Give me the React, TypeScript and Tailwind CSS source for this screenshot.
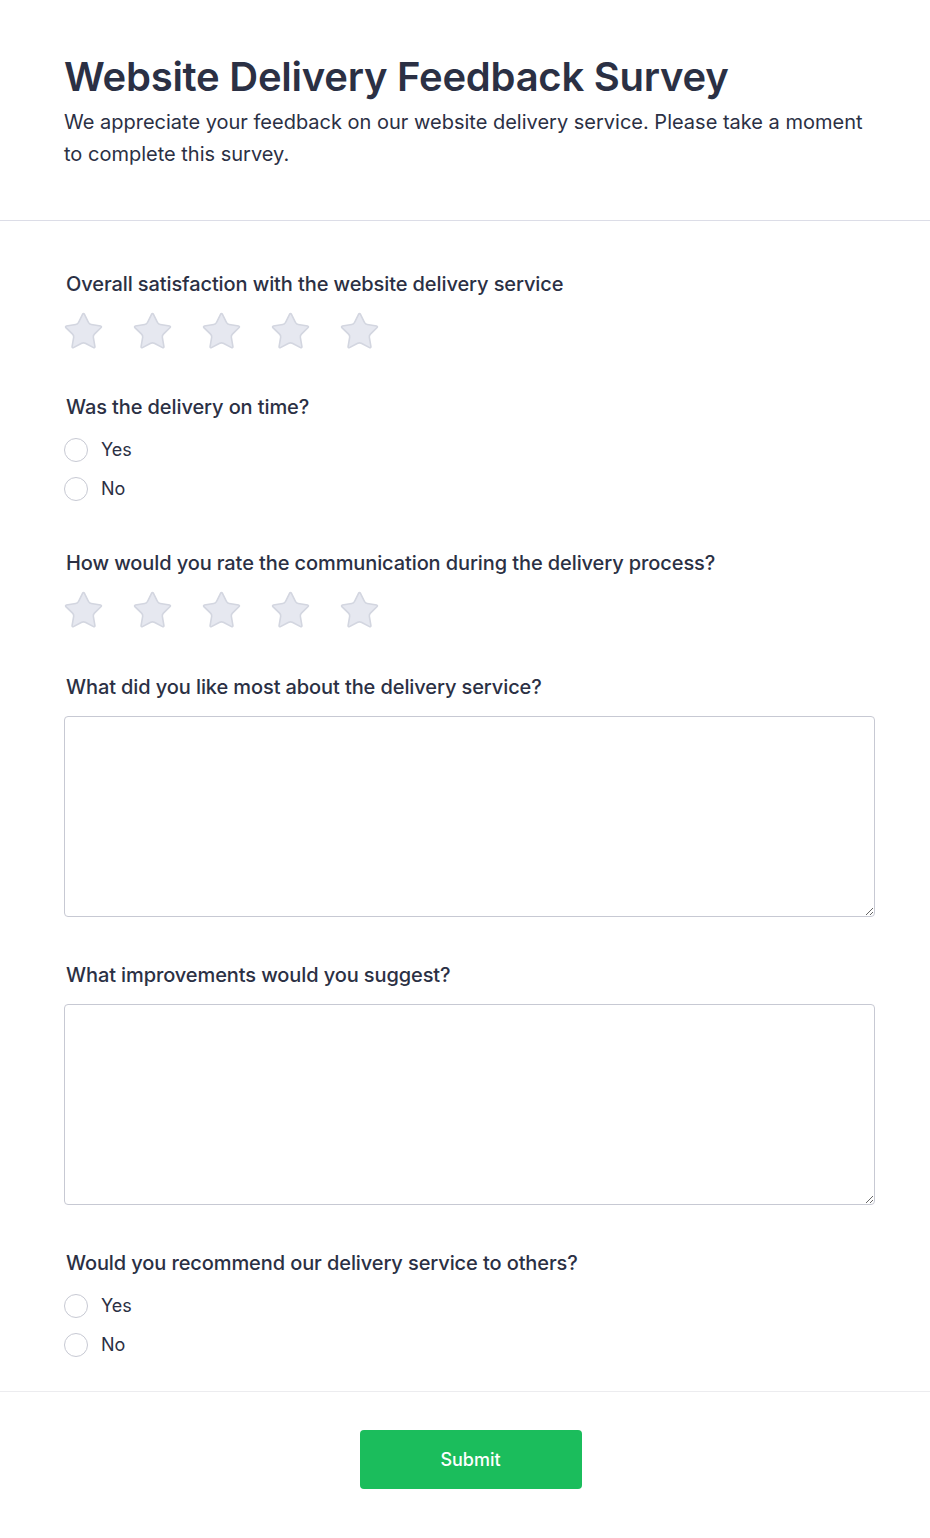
import { Star } from "lucide-react";

const font = { fontFamily: "Inter, 'Noto Sans', sans-serif" };

const StarRow = ({ className = "" }: { className?: string }) => (
  <div className={`-ml-[2px] flex gap-[26px] ${className}`}>
    {[0, 1, 2, 3, 4].map((i) => (
      <Star key={i} size={43} strokeWidth={0.9} className="text-[#d3d6e0]" fill="#e6e8f0" />
    ))}
  </div>
);

const Label = ({ children, className = "" }: { children: React.ReactNode; className?: string }) => (
  <div className={`ml-[2px] text-[20px] font-medium leading-[28px] tracking-[-0.1px] text-[#2b3044] ${className}`}>
    {children}
  </div>
);

const Radio = ({ label }: { label: string }) => (
  <label className="flex h-[28px] items-center gap-[13px]">
    <span className="h-[24px] w-[24px] rounded-full border-[1.5px] border-[#c7c9d3] bg-white" />
    <span className="text-[18px] leading-[28px] text-[#2b3044]">{label}</span>
  </label>
);

const Radios = ({ className = "" }: { className?: string }) => (
  <div className={`flex flex-col gap-[11px] ${className}`}>
    <Radio label="Yes" />
    <Radio label="No" />
  </div>
);

export default function App() {
  return (
    <div className="min-h-[1538px] w-full bg-white" style={font}>
      <header className="pl-16 pr-[55px] pt-[53px] pb-[50px]">
        <h1 className="text-[40px] font-semibold leading-[48px] tracking-[-0.25px] text-[#2b3044]">
          Website Delivery Feedback Survey
        </h1>
        <p className="mt-[5px] text-[20px] leading-[32px] text-[#2b3044]">
          We appreciate your feedback on our website delivery service. Please take a moment
          to complete this survey.
        </p>
      </header>

      <div className="h-px bg-[#dcdde7]" />

      <form className="pl-16 pr-[55px] pt-[49px] pb-[32px]">
        <Label>Overall satisfaction with the website delivery service</Label>
        <StarRow className="mt-[12px]" />

        <Label className="mt-[40px]">Was the delivery on time?</Label>
        <Radios className="mt-[15px]" />

        <Label className="mt-[46px]">
          How would you rate the communication during the delivery process?
        </Label>
        <StarRow className="mt-[12px]" />

        <Label className="mt-[41px]">What did you like most about the delivery service?</Label>
        <textarea className="mt-[15px] block h-[201px] w-full rounded-[4px] border border-[#c7c9d3] p-3 text-[16px] outline-none" />

        <Label className="mt-[44px]">What improvements would you suggest?</Label>
        <textarea className="mt-[15px] block h-[201px] w-full rounded-[4px] border border-[#c7c9d3] p-3 text-[16px] outline-none" />

        <Label className="mt-[44px]">Would you recommend our delivery service to others?</Label>
        <Radios className="mt-[15px]" />
      </form>

      <div className="h-px bg-[#ececef]" />

      <div className="flex justify-center pl-[65px] pr-[54px] pt-[38px] pb-[49px]">
        <button
          type="button"
          className="h-[59px] w-[222px] rounded-[4px] bg-[#1bbd5c] text-[18px] font-medium text-white"
        >
          Submit
        </button>
      </div>
    </div>
  );
}
